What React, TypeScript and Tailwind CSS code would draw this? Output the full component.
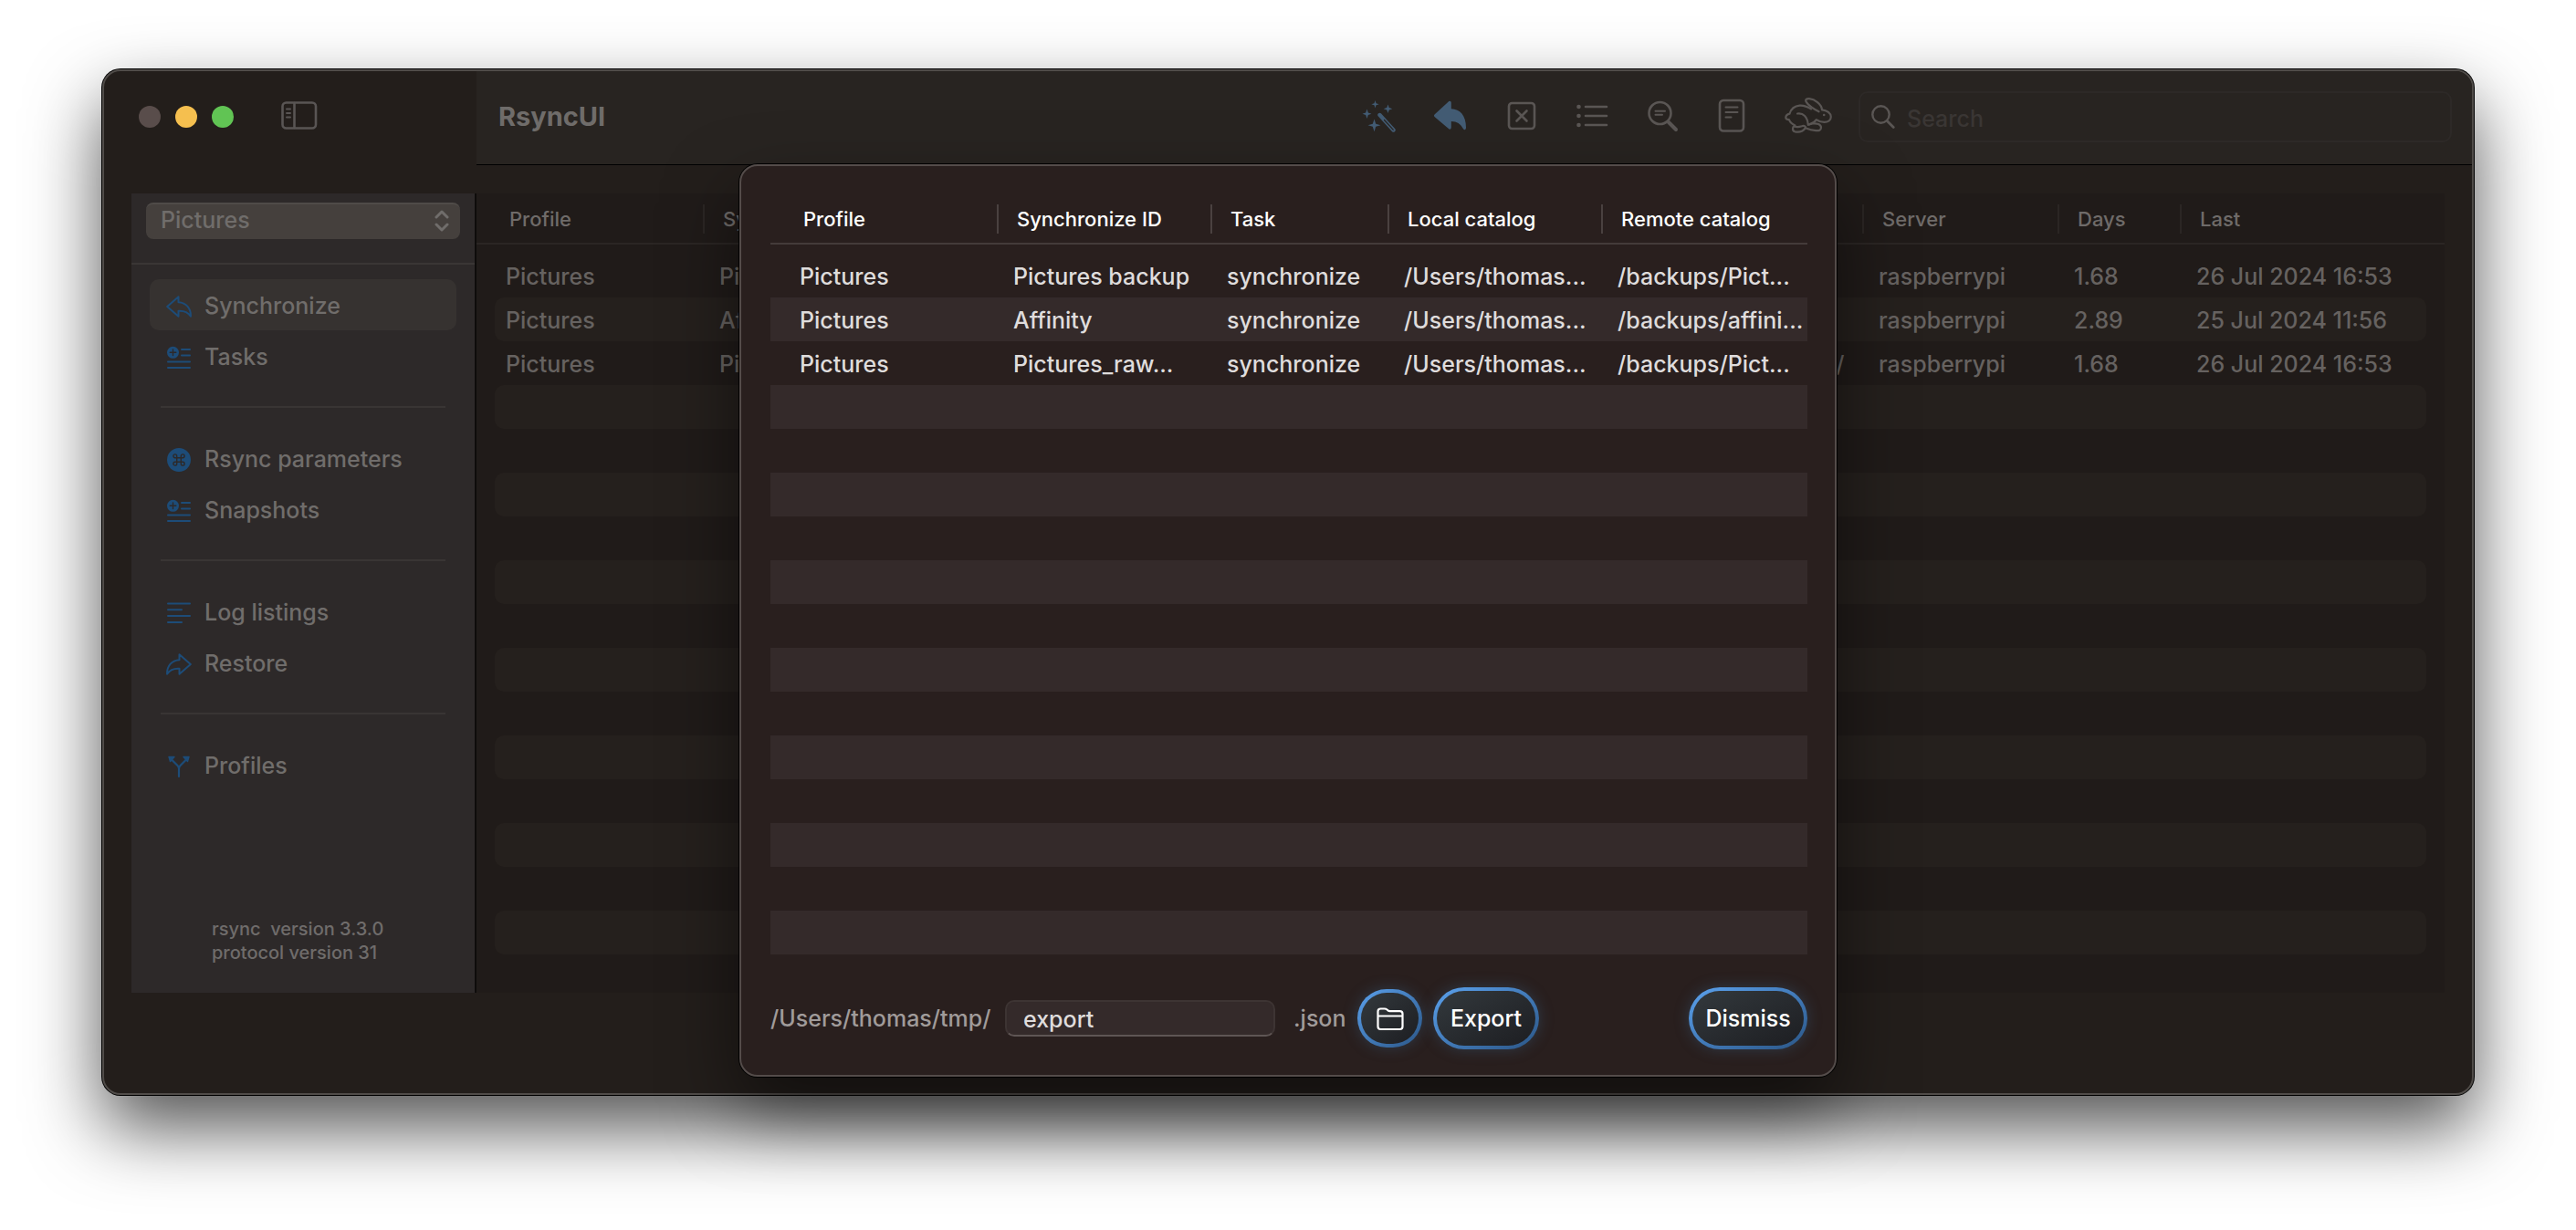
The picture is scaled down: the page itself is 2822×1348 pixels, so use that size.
import type { ReactNode } from "react";

type Column = { label: string; head: string; cell: string };

const taskColumns: Column[] = [
  { label: "Profile", head: "w-[250px] pl-9", cell: "w-[230px] pl-3" },
  { label: "Synchronize ID", head: "w-[234px] pl-5", cell: "w-[234px] pl-4" },
  { label: "Task", head: "w-[194px] pl-5", cell: "w-[194px] pl-4" },
  { label: "Local catalog", head: "w-[520px] pl-5", cell: "w-[520px] pl-4" },
  { label: "Remote catalog", head: "min-w-0 flex-1 pl-5", cell: "min-w-0 flex-1 pl-4" },
  { label: "Server", head: "w-[214px] pl-5", cell: "w-[214px] pl-4" },
  { label: "Days", head: "w-[134px] pl-5", cell: "w-[134px] pl-4" },
  { label: "Last", head: "w-[288px] pl-5", cell: "w-[268px] pl-4" },
];

const taskRows = [
  ["Pictures", "Pictures backup", "synchronize", "/Users/thomas/Pictures/", "/backups/Pictures/", "raspberrypi", "1.68", "26 Jul 2024 16:53"],
  ["Pictures", "Affinity", "synchronize", "/Users/thomas/affinity/", "/backups/affinity/", "raspberrypi", "2.89", "25 Jul 2024 11:56"],
  ["Pictures", "Pictures_raw", "synchronize", "/Users/thomas/Pictures_raw/", "/backups/Pictures_raw/", "raspberrypi", "1.68", "26 Jul 2024 16:53"],
];

const exportColumns: Column[] = [
  { label: "Profile", head: "w-[250px] pl-9", cell: "w-[250px] pl-8" },
  { label: "Synchronize ID", head: "w-[234px] pl-5", cell: "w-[234px] pl-4" },
  { label: "Task", head: "w-[194px] pl-5", cell: "w-[194px] pl-4" },
  { label: "Local catalog", head: "w-[234px] pl-5", cell: "w-[234px] pl-4" },
  { label: "Remote catalog", head: "min-w-0 flex-1 pl-5", cell: "min-w-0 flex-1 pl-4" },
];

const exportRows = [
  ["Pictures", "Pictures backup", "synchronize", "/Users/thomas...", "/backups/Pict..."],
  ["Pictures", "Affinity", "synchronize", "/Users/thomas...", "/backups/affini..."],
  ["Pictures", "Pictures_raw...", "synchronize", "/Users/thomas...", "/backups/Pict..."],
];

const ROW_COUNT = 16;

function DataTable({
  label,
  columns,
  rows,
  headClass,
  lineClass,
  separatorClass,
  cellClass,
  rowClass,
  bandClass,
}: {
  label: string;
  columns: Column[];
  rows: string[][];
  headClass: string;
  lineClass: string;
  separatorClass: string;
  cellClass: string;
  rowClass: string;
  bandClass: string;
}) {
  return (
    <table aria-label={label} className="block w-full">
      <thead className="block">
        <tr className={`flex h-14 border-b-2 pt-3 ${lineClass}`}>
          {columns.map((c, i) => (
            <th key={c.label} scope="col" className={`h-8 shrink-0 text-left text-[22px] leading-8 font-medium whitespace-nowrap ${i < columns.length - 1 ? "border-r-2" : ""} ${separatorClass} ${headClass} ${c.head}`}>
              {c.label}
            </th>
          ))}
        </tr>
      </thead>
      <tbody className="block pt-[10px]">
        {Array.from({ length: ROW_COUNT }, (_, r) => (
          <tr key={r} className={`flex h-12 ${rowClass} ${r % 2 ? bandClass : ""}`}>
            {(rows[r] ?? []).map((text, i) => (
              <td key={i} className={`shrink-0 overflow-hidden text-[25px] leading-[50px] font-[450] whitespace-nowrap ${cellClass} ${columns[i].cell}`}>
                {text}
              </td>
            ))}
          </tr>
        ))}
      </tbody>
    </table>
  );
}

/* ---------- toolbar icons ---------- */

const line = { fill: "none", stroke: "currentColor", strokeLinecap: "round", strokeLinejoin: "round" } as const;

function SidebarIcon() {
  return (
    <svg width="40" height="32" viewBox="0 0 40 32" {...line} strokeWidth="2.6">
      <rect x="1.5" y="1.5" width="36.5" height="28" rx="4" />
      <path d="M14.5 2v27" />
      <path d="M6 8.5h4M6 13h4M6 17.5h4" strokeWidth="2" />
    </svg>
  );
}

function WandIcon() {
  return (
    <svg width="38" height="36" viewBox="0 0 38 36" fill="currentColor">
      <path d="M14.5 1l1 3.200 3.200 1-3.200 1-1 3.200-1-3.200-3.200-1 3.200-1z" />
      <path d="M28.500 5.500l1.200 3.600 3.600 1.200-3.600 1.200-1.200 3.600-1.200-3.600-3.600-1.200 3.600-1.200z" />
      <path d="M5.500 10.500l1.300 4 3.700 1.200-3.700 1.200-1.300 4-1.300-4L.5 15.700l3.700-1.200z" />
      <path d="M13.500 21.500l1.700 5.300 5.300 1.500-5.300 1.500-1.700 5.400-1.700-5.400-5.300-1.500 5.300-1.500z" />
      <path d="M19.500 17L34.500 33.500" stroke="currentColor" strokeWidth="4.400" strokeLinecap="round" />
      <path d="M24.500 22.500L34.200 33.200" stroke="#282421" strokeWidth="1.200" strokeLinecap="round" />
    </svg>
  );
}

function ReplyFillIcon() {
  return (
    <svg width="38" height="34" viewBox="0 0 38 34" fill="currentColor">
      <path d="M17 1.200c1.500-1 2.800-.2 2.800 1.500v6.600c9.500.3 16.200 7 16.200 20.500 0 3-1.900 2.900-3 1.400-3.200-5.700-6.700-8.200-13.200-8.300v6.900c0 1.700-1.500 2.500-2.900 1.300L1.800 18.300c-1.100-1-1.100-2 0-3z" />
    </svg>
  );
}

function XSquareIcon() {
  return (
    <svg width="34" height="34" viewBox="0 0 34 34" {...line} strokeWidth="2.600">
      <rect x="3" y="3" width="28" height="28" rx="3.500" />
      <path d="M11.500 11.500l11 11M22.500 11.500l-11 11" />
    </svg>
  );
}

function ListIcon() {
  return (
    <svg width="36" height="28" viewBox="0 0 36 28" {...line} strokeWidth="2.600">
      <path d="M11 4h23M11 14h23M11 24h23" />
      <g fill="currentColor" stroke="none">
        <circle cx="3.500" cy="4" r="2.300" />
        <circle cx="3.500" cy="14" r="2.300" />
        <circle cx="3.500" cy="24" r="2.300" />
      </g>
    </svg>
  );
}

function TextSearchIcon() {
  return (
    <svg width="36" height="36" viewBox="0 0 36 36" {...line} strokeWidth="2.600">
      <circle cx="14.500" cy="15" r="12" />
      <path d="M24 25l8 8" strokeWidth="4" />
      <path d="M9.500 12.700h10.500M9.500 16.800h7.500" strokeWidth="2" />
    </svg>
  );
}

function DocIcon() {
  return (
    <svg width="30" height="38" viewBox="0 0 30 38" {...line} strokeWidth="2.600">
      <rect x="2" y="2" width="26" height="33.500" rx="4" />
      <path d="M8.500 9.500h13M8.500 15h13M8.500 20.500h6" strokeWidth="2" />
    </svg>
  );
}

function HareIcon() {
  return (
    <svg width="54" height="40" viewBox="0 0 54 40" {...line} strokeWidth="2.200">
      <path d="M30 12.400C25.500 9.600 21.500 8.400 17.500 8.700 12 9.200 8 12.800 6.500 17.600 4 18.300 2.300 19.700 2.300 21.700c0 1.700 1.500 2.400 3.600 2.500 1 2.700 3 4.700 6.600 6.200" />
      <path d="M38.500 15.300C34.500 13.500 26.500 8.500 24.500 4.300c-.9-2 .3-3.300 3.500-3.100C34 1.700 41.500 7 42 13.300c5.500.5 9.800 4 9.800 7.800 0 3.600-3.200 5.800-7.300 5.800-3.500 0-6.500-1.300-8.700-2.700-2 3-4.800 4.400-7.800 5.200" />
      <path d="M15 17.500c6.500-1 11 3.500 11.800 12.300l4.500-1.300c5.200-.7 9.700.5 9.700 4.300 0 3-2.500 3.500-5.500 3.300-3.500-.2-7.500-1-11-2.600" />
      <path d="M11.800 31c-2.500 1.300-2.600 5.500.6 6.300 4 .8 8.300 0 10.800-3.300 2-2.500-.8-3.700-3.400-2.700-2.800 1-5.300 1.400-8 .2" />
      <circle cx="44.200" cy="19" r="1.300" fill="currentColor" stroke="none" />
    </svg>
  );
}

function SearchIcon() {
  return (
    <svg width="28" height="28" viewBox="0 0 28 28" {...line} strokeWidth="2.400">
      <circle cx="11.500" cy="11.500" r="9.200" />
      <path d="M18.300 18.500l7 7" strokeWidth="2.800" />
    </svg>
  );
}

/* ---------- sidebar icons ---------- */

const replyPath = "M13.500 1.200L1.200 12l12.300 10.800v-6C20 16.300 23.600 18 26.900 22.600 27.300 14 22 7.600 13.500 7.200z";

function ReplyIcon() {
  return (
    <svg width="28" height="24" viewBox="0 0 28 24" {...line} strokeWidth="2">
      <path d={replyPath} />
    </svg>
  );
}

function ForwardIcon() {
  return (
    <svg width="28" height="24" viewBox="0 0 28 24" {...line} strokeWidth="2">
      <path d={replyPath} transform="matrix(-1 0 0 1 28 0)" />
    </svg>
  );
}

function AddListIcon() {
  return (
    <svg width="28" height="26" viewBox="0 0 28 26" {...line} strokeWidth="2">
      <circle cx="7.500" cy="7.300" r="6.500" fill="currentColor" stroke="none" />
      <path d="M7.500 4v6.600M4.200 7.300h6.600" stroke="#2d2929" strokeWidth="1.400" />
      <path d="M17 4h9M17 10.500h9M2 17.500h24M2 24h24" />
    </svg>
  );
}

function CommandIcon() {
  return (
    <svg width="28" height="28" viewBox="0 0 28 28" {...line}>
      <circle cx="14" cy="14" r="13" fill="currentColor" stroke="none" />
      <path
        d="M11.700 16.300v-4.600h4.600v4.600zM11.700 11.700H9.800a1.900 1.900 0 1 1 1.900-1.900zM16.300 11.700V9.800a1.900 1.900 0 1 1 1.900 1.900zM16.300 16.300h1.900a1.900 1.900 0 1 1-1.900 1.900zM11.700 16.300v1.900a1.900 1.900 0 1 1-1.900-1.900z"
        stroke="#2d2929"
        strokeWidth="1.400"
      />
    </svg>
  );
}

function LogIcon() {
  return (
    <svg width="28" height="24" viewBox="0 0 28 24" {...line} strokeWidth="2">
      <path d="M2 1.500h24M2 8.300h15M2 15.100h24M2 21.900h15" />
    </svg>
  );
}

function BranchIcon() {
  return (
    <svg width="28" height="26" viewBox="0 0 28 26" {...line} strokeWidth="2.200">
      <path d="M14 24v-8.500c0-1.500-.5-2.500-1.500-3.500L6 5.500M14 15.500c0-1.500.5-2.500 1.500-3.500L22 5.500" />
      <path d="M3 2.500h6L4.500 7.500zM25 2.500h-6l4.500 5z" fill="currentColor" strokeWidth="1.400" />
    </svg>
  );
}

function NavItem({ icon, children, selected = false }: { icon: ReactNode; children: ReactNode; selected?: boolean }) {
  return (
    <button
      type="button"
      aria-current={selected ? "page" : undefined}
      className={`flex h-14 w-full items-center gap-3 rounded-[10px] pt-[3px] pl-[18px] text-left text-[25px] font-[450] text-[#706d6b] ${selected ? "bg-[#363230]" : ""}`}
    >
      <span className="flex w-[30px] shrink-0 text-[#1d4c78]">{icon}</span>
      {children}
    </button>
  );
}

function NavDivider() {
  return (
    <div className="flex h-14 items-center px-3">
      <hr className="w-full border-t-2 border-[#393534]" />
    </div>
  );
}

function GlowButton({ children, label, className }: { children: ReactNode; label?: string; className: string }) {
  return (
    <button
      type="button"
      aria-label={label}
      className={`flex items-center justify-center rounded-[34px] bg-linear-to-br from-[#5ba2ee] to-[#2b5687] p-1 text-[25px] font-medium text-white shadow-[0_0_16px_rgba(60,110,150,0.35)] ${className}`}
    >
      <span className="flex h-full w-full items-center justify-center rounded-[30px] bg-linear-to-br from-[#33393d] to-[#1d1e22] pt-[2px]">{children}</span>
    </button>
  );
}

function ToolButton({ label, className, children }: { label: string; className: string; children: ReactNode }) {
  return (
    <button type="button" aria-label={label} className={`flex h-10 items-center justify-center ${className}`}>
      {children}
    </button>
  );
}

export default function App() {
  return (
    <div className="min-h-screen bg-white px-28 pt-[76px] pb-[148px] font-[Inter,sans-serif]">
      <div className="relative rounded-[20px] border-2 border-[#504c49] bg-[#231e1b] shadow-[0_0_0_1px_#000,0_36px_80px_rgba(0,0,0,0.68)]">
        <header className="flex h-[103px]">
          <div className="flex w-[408px] shrink-0 items-start pt-[33px] pl-[38px]">
            <div className="flex gap-4 pt-[5px]">
              <button type="button" aria-label="Close" className="h-6 w-6 rounded-full bg-[#594d4b]" />
              <button type="button" aria-label="Minimize" className="h-6 w-6 rounded-full bg-[#f5bf4f]" />
              <button type="button" aria-label="Zoom" className="h-6 w-6 rounded-full bg-[#61c454]" />
            </div>
            <button type="button" aria-label="Toggle sidebar" className="ml-[52px] text-[#595554]">
              <SidebarIcon />
            </button>
          </div>
          <div className="flex min-w-0 flex-1 items-start rounded-tr-[18px] border-b border-black bg-[#282421] pt-[22px] pr-[22px] pl-6 text-[#5a5654]">
            <h1 className="flex-1 pt-[10px] text-[29px] leading-9 font-bold text-[#6f6c6a]">RsyncUI</h1>
            <div className="flex h-[54px] items-center pr-7">
              <ToolButton label="Estimate" className="w-[78px] text-[#435c74]"><WandIcon /></ToolButton>
              <ToolButton label="Synchronize tasks" className="w-[78px] text-[#435c74]"><ReplyFillIcon /></ToolButton>
              <ToolButton label="Reset" className="w-[78px]"><XSquareIcon /></ToolButton>
              <ToolButton label="Task list" className="w-[76px]"><ListIcon /></ToolButton>
              <ToolButton label="Details" className="w-[80px]"><TextSearchIcon /></ToolButton>
              <ToolButton label="View output" className="w-[70px]"><DocIcon /></ToolButton>
              <ToolButton label="Quick synchronize" className="ml-[22px] w-[54px]"><HareIcon /></ToolButton>
            </div>
            <label className="flex h-14 w-[650px] items-center gap-3 rounded-[10px] border-2 border-[#2d2927] pl-[11px]">
              <SearchIcon />
              <input type="text" aria-label="Search" placeholder="Search" className="min-w-0 flex-1 bg-transparent pt-[6px] text-[25px] font-[450] text-[#6f6c6a] outline-none placeholder:text-[#3a3634]" />
            </label>
          </div>
        </header>

        <div className="flex px-[30px] pt-[31px] pb-[110px]">
          <aside className="flex w-[378px] shrink-0 flex-col border-r-2 border-[#0e0c0b] bg-[#2d2929]">
            <div className="relative mx-4 mt-[10px] text-[#706d6b]">
              <select aria-label="Profile" className="h-10 w-full appearance-none rounded-lg border-t-2 border-[#4f4b48] bg-[#45403d] pb-[5px] pl-4 text-[25px] leading-8 font-[450]">
                <option>Pictures</option>
              </select>
              <svg className="pointer-events-none absolute top-2 right-3" width="16" height="24" viewBox="0 0 16 24" {...line} strokeWidth="3">
                <path d="M2 8l6-6 6 6M2 16l6 6 6-6" />
              </svg>
            </div>
            <hr className="mt-[26px] border-t-2 border-[#3a3635]" />
            <nav className="flex-1 px-5 pt-4">
              <NavItem selected icon={<ReplyIcon />}>Synchronize</NavItem>
              <NavItem icon={<AddListIcon />}>Tasks</NavItem>
              <NavDivider />
              <NavItem icon={<CommandIcon />}>Rsync parameters</NavItem>
              <NavItem icon={<AddListIcon />}>Snapshots</NavItem>
              <NavDivider />
              <NavItem icon={<LogIcon />}>Log listings</NavItem>
              <NavItem icon={<ForwardIcon />}>Restore</NavItem>
              <NavDivider />
              <NavItem icon={<BranchIcon />}>Profiles</NavItem>
            </nav>
            <p className="pb-[31px] pl-[88px] text-[20px] leading-[26px] font-medium whitespace-pre text-[#6f6c6b]">
              {"rsync  version 3.3.0\nprotocol version 31"}
            </p>
          </aside>
          <main className="min-w-0 flex-1 bg-[#201b19] pb-[42px]">
            <DataTable
              label="Tasks"
              columns={taskColumns}
              rows={taskRows}
              headClass="text-[#6f6b69]"
              lineClass="border-[#2b2624]"
              separatorClass="border-[#2b2624]"
              cellClass="text-[#666260]"
              rowClass="mx-5 rounded-[10px]"
              bandClass="bg-[#25201d]"
            />
          </main>
        </div>

        <div className="absolute inset-x-0 top-[102px] flex justify-center">
          <section
            role="dialog"
            aria-label="Export tasks"
            className="w-[1202px] rounded-[20px] border-2 border-[#544c4a] bg-[#291f1e] pt-[30px] pr-[30px] pb-7 pl-8 shadow-[0_0_0_1px_#000,0_36px_80px_rgba(0,0,0,0.5)]"
          >
            <DataTable
              label="Tasks to export"
              columns={exportColumns}
              rows={exportRows}
              headClass="text-white"
              lineClass="border-[#443b3a]"
              separatorClass="border-[#4a4140]"
              cellClass="text-[#dfdcdc]"
              rowClass=""
              bandClass="bg-[#342a2a]"
            />
            <form className="mt-9 flex h-[68px] items-center text-[25px] font-[450] text-[#a09b9a]" onSubmit={(e) => e.preventDefault()}>
              <label htmlFor="filename" className="w-[257px] pt-[2px]">/Users/thomas/tmp/</label>
              <input
                id="filename"
                type="text"
                defaultValue="export"
                className="h-10 w-[296px] rounded-[10px] border-2 border-[#3d3433] border-b-[#5f5655] bg-[#342a2a] pt-[2px] pl-[18px] text-[25px] text-[#dfdcdc] outline-none"
              />
              <span className="w-[90px] pt-[2px] pl-5">.json</span>
              <GlowButton label="Choose folder" className="h-16 w-[71px]">
                <svg width="30" height="26" viewBox="0 0 30 26" {...line} strokeWidth="2.200">
                  <path d="M1.500 21V4.500c0-2 1-3 3-3h4.300c1.200 0 1.900.3 2.700 1l1 .9c.6.500 1.200.7 2 .7H25.500c2 0 3 1 3 3V21c0 2-1 3-3 3h-21c-2 0-3-1-3-3zM1.500 9.500h27" />
                </svg>
              </GlowButton>
              <GlowButton className="ml-3 h-[68px] w-[116px]">Export</GlowButton>
              <GlowButton className="ml-auto h-[68px] w-[130px]">Dismiss</GlowButton>
            </form>
          </section>
        </div>
      </div>
    </div>
  );
}
